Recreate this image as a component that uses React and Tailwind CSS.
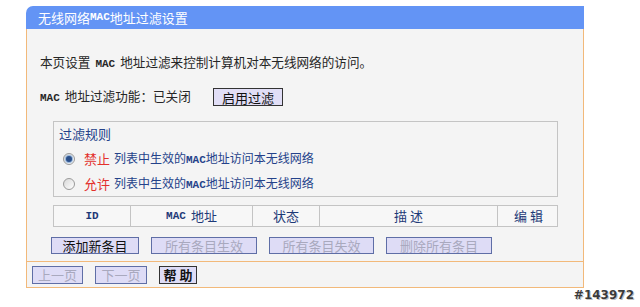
import React from "react";

const font = { fontFamily: '"Noto Sans CJK SC", "Noto Sans", sans-serif' };
const mono = { fontFamily: '"Liberation Mono", "DejaVu Sans Mono", monospace' };

function Mac() {
  return (
    <span className="text-[11px] font-bold" style={mono}>
      MAC
    </span>
  );
}

function Sp() {
  return <span className="inline-block w-[5px]" />;
}

function Btn({ children, disabled, className = "" }) {
  return (
    <div
      className={`flex items-center justify-center border border-[#5f6ea6] bg-[#dedcf6] text-[13px] leading-none ${
        disabled ? "text-[#a9a9be]" : "text-[#111]"
      } ${className}`}
    >
      {children}
    </div>
  );
}

function Radio({ checked }) {
  return (
    <span className="flex h-[12px] w-[12px] items-center justify-center rounded-full border border-[#9a9a9a] bg-gradient-to-br from-[#d8d8d8] to-[#ffffff]">
      {checked && <span className="h-[6px] w-[6px] rounded-full bg-[#2a4f8a] shadow-[0_0_1px_1px_#8fb0d8]" />}
    </span>
  );
}

function RuleRow({ word, checked }) {
  return (
    <div className="flex h-[16px] items-center text-[12px]">
      <div className="ml-[9px] w-[21px]">
        <Radio checked={checked} />
      </div>
      <span className="w-[30px] text-[13px] text-[#e3302c]">{word}</span>
      <span className="text-[#24428a]">
        列表中生效的<Mac />地址访问本无线网络
      </span>
    </div>
  );
}

export default function App() {
  return (
    <div className="min-h-[307px] bg-white pl-[26px] pt-[6px] text-[#262626]" style={font}>
      <div className="flex w-[558px] flex-col">
        <div className="flex h-[23px] items-center rounded-tl-[7px] bg-[#6394f5] pl-[12px] text-[13px] text-white">
          无线网络<Mac />地址过滤设置
        </div>
        <div className="flex flex-col border-x border-[#f2b97a] bg-[#f4f4f4]">
          <div className="mt-[25px] h-[16px] pl-[13px] text-[12.6px] leading-[16px]">
            本页设置<Sp /><Mac /><Sp />地址过滤来控制计算机对本无线网络的访问。
          </div>
          <div className="mt-[18px] flex h-[18px] items-center pl-[13px] text-[12.6px]">
            <span className="w-[173px]">
              <Mac /><Sp />地址过滤功能：已关闭
            </span>
            <Btn className="h-[18px] w-[70px] border-[#333] bg-[#e1def6]">启用过滤</Btn>
          </div>
          <div className="ml-[26px] mt-[15px] flex h-[76px] w-[505px] flex-col border border-[#c4c4c4]">
            <div className="mt-[4px] pl-[5px] text-[13px] leading-[16px] text-[#24428a]">过滤规则</div>
            <div className="mt-[9px] flex flex-col gap-[9px]">
              <RuleRow word="禁止" checked />
              <RuleRow word="允许" />
            </div>
          </div>
          <div className="ml-[26px] mt-[8px] grid h-[22px] w-[505px] grid-cols-[77px_122px_67px_178px_61px] border border-[#c4c4c4] bg-[#f7f7f7] text-[13px] text-[#1e3a78]">
            <div className="flex items-center justify-center border-r border-[#c4c4c4] text-[11px] font-bold" style={mono}>ID</div>
            <div className="flex items-center justify-center border-r border-[#c4c4c4]">
              <Mac /><Sp />地址
            </div>
            <div className="flex items-center justify-center border-r border-[#c4c4c4]">状态</div>
            <div className="flex items-center justify-center border-r border-[#c4c4c4]">描 述</div>
            <div className="flex items-center justify-center">编 辑</div>
          </div>
          <div className="ml-[24px] mt-[10px] flex h-[17px] gap-[12px]">
            <Btn className="w-[88px]">添加新条目</Btn>
            <Btn disabled className="w-[106px]">所有条目生效</Btn>
            <Btn disabled className="w-[105px]">所有条目失效</Btn>
            <Btn disabled className="w-[106px]">删除所有条目</Btn>
          </div>
          <div className="mt-[7px] h-px bg-[#f2b97a]" />
          <div className="flex h-[25px] items-center gap-[12px] pl-[5px]">
            <Btn disabled className="h-[18px] w-[51px]">上一页</Btn>
            <Btn disabled className="h-[18px] w-[52px]">下一页</Btn>
            <Btn className="h-[18px] w-[38px] border-[#333] font-bold">帮 助</Btn>
          </div>
        </div>
        <div className="h-px bg-[#f2b97a]" />
      </div>
      <div className="flex w-[608px] justify-end">
        <span
          className="text-[12px] font-bold leading-[14px] text-[#3a3a3a]"
          style={{ fontFamily: '"DejaVu Sans", sans-serif', textShadow: "0 0 1px #fff, 1px 1px 0 #bbb" }}
        >
          #143972
        </span>
      </div>
    </div>
  );
}
